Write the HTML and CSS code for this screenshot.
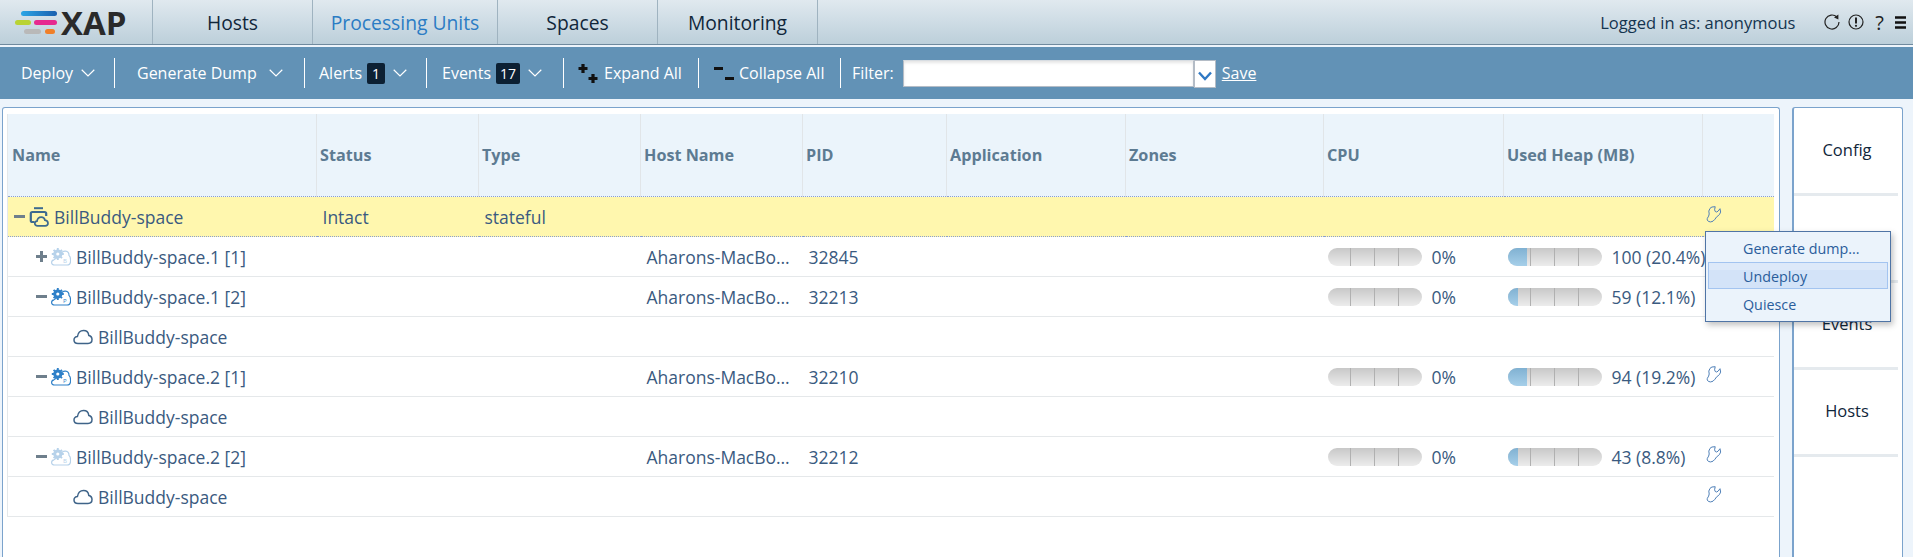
FILE: index.html
```html
<!DOCTYPE html>
<html lang="en">
<head>
    <meta charset="UTF-8">
    <title>XAP - Processing Units</title>
    <link rel="stylesheet" href="styles.css">
</head>
<body>

    <svg class="icon-defs" width="0" height="0">
        <defs>
            <linearGradient id="logo-blue">
                <stop offset="0" stop-color="#2ba6e6"/>
                <stop offset="1" stop-color="#1a5fae"/>
            </linearGradient>
        </defs>
        <symbol id="wrench" viewBox="-1 -1 16 18">
            <path d="M5 1 L8.2 0.7 L7.6 3.8 Q7.8 6 9.6 6 Q10.8 6 13 2.7 Q14.6 6.5 12.4 8.6 Q11.2 9.8 9.7 10.8 Q8 13.5 6 15.2 Q3.5 16.6 1.4 15.4 Q-0.4 14 0.3 12.4 Q2 10 2.2 8 Q1 5 3 2.4 Q4 1.4 5 1 Z" fill="none" stroke="#4f80b8" stroke-width="1"/>
        </symbol>
        <symbol id="cloud" viewBox="0 0 20 16">
            <path d="M5 14.5 C2.5 14.5 1 13 1 11 C1 9 2.5 7.6 4.4 7.6 C5 4 7.6 1.6 10.6 1.6 C13.4 1.6 15.4 3.6 15.8 6.4 C17.8 6.8 19 8.6 19 10.6 C19 13 17.2 14.5 15 14.5 Z" fill="none" stroke="#3f6489" stroke-width="1.5"/>
        </symbol>
        <symbol id="space" viewBox="0 0 20 20">
            <path d="M5 1.2 H14" stroke="#3d6a8f" stroke-width="2"/>
            <path d="M5.5 15 H3.5 C2.4 15 1.8 14.4 1.8 13.4 V6.6 C1.8 5.6 2.4 5 3.4 5 H15.4 C16.6 5 17.2 5.6 17.2 6.6 V9" fill="none" stroke="#3d6a8f" stroke-width="2.2"/>
            <path d="M8.5 18.8 C6.8 18.8 5.8 17.8 5.8 16.5 C5.8 15.2 6.8 14.3 8 14.2 C8.4 11.8 10 10.2 12.2 10.2 C14.2 10.2 15.6 11.5 15.9 13.2 C17.6 13.4 19 14.6 19 16.3 C19 17.8 17.8 18.8 16.2 18.8 Z" fill="none" stroke="#3d6a8f" stroke-width="1.7"/>
        </symbol>
        <symbol id="gear-cloud" viewBox="0 0 20 18">
            <path d="M3.5 17 C1.6 17 0.6 15.8 0.6 14.4 C0.6 13 1.6 12 3 11.8 L10 7 C10.6 4.4 12.6 3 14.6 3.2 C16.8 3.4 18 5.2 18 7.4 C19.2 8.4 19.6 10 19.6 12.4 C19.6 15.4 18.2 17 16 17 Z" fill="none" stroke="currentColor" stroke-width="1.2"/>
            <circle cx="6.8" cy="6" r="3.2" fill="none" stroke="currentColor" stroke-width="2.8"/>
            <path d="M6.8 0 V12 M0.8 6 H12.8 M2.6 1.8 L11 10.2 M11 1.8 L2.6 10.2" stroke="currentColor" stroke-width="1.9"/>
            <circle cx="6.8" cy="6" r="1.6" fill="#fff"/>
        </symbol>
        <symbol id="chevron" viewBox="0 0 14 8">
            <path d="M0.7 0.8 L7 7 L13.3 0.8" fill="none" stroke="currentColor" stroke-width="1.2"/>
        </symbol>
    </svg>

    <header class="top-bar">
        <div class="logo">
            <svg class="logo-bars" width="42" height="23" viewBox="0 0 42 23">
                <rect x="6" y="0" width="36" height="5" rx="2.5" fill="url(#logo-blue)"/>
                <rect x="0" y="9" width="16" height="5" rx="2.5" fill="#b9d334"/>
                <rect x="19" y="9" width="23" height="5" rx="2.5" fill="#e6298f"/>
                <rect x="9" y="18" width="17" height="5" rx="2.5" fill="#b9b9b9"/>
                <rect x="30" y="18" width="10" height="5" rx="2.5" fill="#f0802a"/>
            </svg>
            <span class="logo-text">XAP</span>
        </div>
        <nav class="nav-tabs">
            <a class="nav-tab">Hosts</a>
            <a class="nav-tab nav-wide active">Processing Units</a>
            <a class="nav-tab">Spaces</a>
            <a class="nav-tab">Monitoring</a>
        </nav>
        <div class="user-box">
            <span class="user-name">Logged in as: anonymous</span>
            <svg class="top-icon" width="16" height="16" viewBox="0 0 16 16">
                <path d="M12.9 3 A7 7 0 1 0 15 8" fill="none" stroke="#222" stroke-width="1.2"/>
                <path d="M10 3.4 L14.4 0.6 L14.4 5.4 Z" fill="#222"/>
            </svg>
            <svg class="top-icon" width="16" height="16" viewBox="0 0 16 16">
                <circle cx="8" cy="8" r="7" fill="none" stroke="#222" stroke-width="1.2"/>
                <path d="M8 3.4 V9.4" stroke="#222" stroke-width="2"/>
                <circle cx="8" cy="11.8" r="1.1" fill="#222"/>
            </svg>
            <span class="help-mark">?</span>
            <svg class="top-icon" width="11" height="13" viewBox="0 0 11 13">
                <path d="M0 1.5 H11 M0 6.5 H11 M0 11.5 H11" stroke="#111" stroke-width="2.4"/>
            </svg>
        </div>
    </header>

    <div class="toolbar">
        <div class="tool tool-deploy">Deploy <svg class="chevron"><use href="#chevron"/></svg></div>
        <div class="tool tool-dump">Generate Dump <svg class="chevron"><use href="#chevron"/></svg></div>
        <div class="tool tool-alerts">Alerts <span class="badge">1</span> <svg class="chevron"><use href="#chevron"/></svg></div>
        <div class="tool tool-events">Events <span class="badge">17</span> <svg class="chevron"><use href="#chevron"/></svg></div>
        <div class="tool tool-expand">
            <svg class="tree-all" width="20" height="22" viewBox="0 0 20 22">
                <path d="M5 2 V11 M0.5 6.5 H9.5 M15 12 V21 M10.5 16.5 H19.5" stroke="#111" stroke-width="3.2"/>
            </svg>
            Expand All
        </div>
        <div class="tool tool-collapse">
            <svg class="tree-all" width="20" height="22" viewBox="0 0 20 22">
                <path d="M0 6.5 H9 M11 16.5 H20" stroke="#111" stroke-width="3.2"/>
            </svg>
            Collapse All
        </div>
        <div class="filter-box">
            <label class="filter-label" for="filter">Filter:</label>
            <input class="filter-input" id="filter" type="text">
            <span class="filter-arrow">
                <svg width="14" height="10" viewBox="0 0 14 10"><path d="M1 1.5 L7 8 L13 1.5" fill="none" stroke="#2f78c4" stroke-width="2.4"/></svg>
            </span>
            <a class="save-link">Save</a>
        </div>
    </div>

    <main class="content">
        <section class="grid-panel">
            <table class="pu-table">
                <colgroup>
                    <col class="col-name"><col class="col-std"><col class="col-std"><col class="col-std">
                    <col class="col-pid"><col class="col-app"><col class="col-zones"><col class="col-cpu">
                    <col class="col-heap"><col>
                </colgroup>
                <thead>
                    <tr>
                        <th>Name</th><th>Status</th><th>Type</th><th>Host Name</th><th>PID</th>
                        <th>Application</th><th>Zones</th><th>CPU</th><th>Used Heap (MB)</th><th></th>
                    </tr>
                </thead>
                <tbody>
                    <tr class="selected">
                        <td><div class="tree-cell"><span class="toggle"></span><svg class="node-icon"><use href="#space"/></svg>BillBuddy-space</div></td>
                        <td>Intact</td><td>stateful</td><td></td><td></td><td></td><td></td><td></td><td></td>
                        <td class="wrench-cell"><svg class="wrench"><use href="#wrench"/></svg></td>
                    </tr>
                    <tr>
                        <td><div class="tree-cell level-1"><span class="toggle plus"></span><svg class="node-icon faded" viewBox="0 0 20 18"><use href="#gear-cloud"/><text x="12" y="15" class="role-letter">B</text></svg>BillBuddy-space.1 [1]</div></td>
                        <td></td><td></td><td>Aharons-MacBo&hellip;</td><td>32845</td><td></td><td></td>
                        <td><div class="meter-cell"><div class="meter"><i></i><i></i><i></i><i></i></div>0%</div></td>
                        <td><div class="meter-cell"><div class="meter"><b class="fill" style="width:19px"></b><i></i><i></i><i></i><i></i></div>100 (20.4%)</div></td>
                        <td></td>
                    </tr>
                    <tr>
                        <td><div class="tree-cell level-1"><span class="toggle"></span><svg class="node-icon primary" viewBox="0 0 20 18"><use href="#gear-cloud"/><text x="12" y="15" class="role-letter">P</text></svg>BillBuddy-space.1 [2]</div></td>
                        <td></td><td></td><td>Aharons-MacBo&hellip;</td><td>32213</td><td></td><td></td>
                        <td><div class="meter-cell"><div class="meter"><i></i><i></i><i></i><i></i></div>0%</div></td>
                        <td><div class="meter-cell"><div class="meter"><b class="fill" style="width:10px"></b><i></i><i></i><i></i><i></i></div>59 (12.1%)</div></td>
                        <td></td>
                    </tr>
                    <tr>
                        <td><div class="tree-cell level-2"><svg class="node-icon"><use href="#cloud"/></svg>BillBuddy-space</div></td>
                        <td></td><td></td><td></td><td></td><td></td><td></td><td></td><td></td><td></td>
                    </tr>
                    <tr>
                        <td><div class="tree-cell level-1"><span class="toggle"></span><svg class="node-icon primary" viewBox="0 0 20 18"><use href="#gear-cloud"/><text x="12" y="15" class="role-letter">P</text></svg>BillBuddy-space.2 [1]</div></td>
                        <td></td><td></td><td>Aharons-MacBo&hellip;</td><td>32210</td><td></td><td></td>
                        <td><div class="meter-cell"><div class="meter"><i></i><i></i><i></i><i></i></div>0%</div></td>
                        <td><div class="meter-cell"><div class="meter"><b class="fill" style="width:19px"></b><i></i><i></i><i></i><i></i></div>94 (19.2%)</div></td>
                        <td class="wrench-cell"><svg class="wrench"><use href="#wrench"/></svg></td>
                    </tr>
                    <tr>
                        <td><div class="tree-cell level-2"><svg class="node-icon"><use href="#cloud"/></svg>BillBuddy-space</div></td>
                        <td></td><td></td><td></td><td></td><td></td><td></td><td></td><td></td><td></td>
                    </tr>
                    <tr>
                        <td><div class="tree-cell level-1"><span class="toggle"></span><svg class="node-icon faded" viewBox="0 0 20 18"><use href="#gear-cloud"/><text x="12" y="15" class="role-letter">B</text></svg>BillBuddy-space.2 [2]</div></td>
                        <td></td><td></td><td>Aharons-MacBo&hellip;</td><td>32212</td><td></td><td></td>
                        <td><div class="meter-cell"><div class="meter"><i></i><i></i><i></i><i></i></div>0%</div></td>
                        <td><div class="meter-cell"><div class="meter"><b class="fill" style="width:10px"></b><i></i><i></i><i></i><i></i></div>43 (8.8%)</div></td>
                        <td class="wrench-cell"><svg class="wrench"><use href="#wrench"/></svg></td>
                    </tr>
                    <tr>
                        <td><div class="tree-cell level-2"><svg class="node-icon"><use href="#cloud"/></svg>BillBuddy-space</div></td>
                        <td></td><td></td><td></td><td></td><td></td><td></td><td></td><td></td>
                        <td class="wrench-cell"><svg class="wrench"><use href="#wrench"/></svg></td>
                    </tr>
                </tbody>
            </table>
        </section>

        <aside class="side-tabs">
            <a class="side-tab">Config</a>
            <a class="side-tab"></a>
            <a class="side-tab">Events</a>
            <a class="side-tab">Hosts</a>
        </aside>
    </main>

    <ul class="context-menu">
        <li>Generate dump...</li>
        <li class="hover">Undeploy</li>
        <li>Quiesce</li>
    </ul>

</body>
</html>
```

FILE: styles.css
```css
html, body {
    height: 100%;
}

body {
    font-family: "Open Sans", Arial, sans-serif;
    margin: 0;
    padding: 0;
    height: 100vh;
    overflow: hidden;
    display: flex;
    flex-direction: column;
    background-color: #edf4fb;
    color: #3a5a80;
}

.icon-defs {
    position: absolute;
}

.role-letter {
    font-size: 6px;
    fill: currentColor;
}

/* top bar */
.top-bar {
    display: flex;
    align-items: stretch;
    height: 44px;
    flex: none;
    background: linear-gradient(#e0e9ef, #bccfda);
    border-bottom: 1px solid #6f8a9e;
}

.logo {
    width: 152px;
    display: flex;
    align-items: center;
    padding-left: 15px;
    box-sizing: border-box;
    gap: 4px;
}

.logo-text {
    font-size: 33px;
    font-weight: 700;
    color: #2a2a2a;
    line-height: 1;
}

.logo-bars {
    margin-top: 1px;
    flex: none;
}

.nav-tabs {
    display: flex;
    border-left: 1px solid #9fb3c0;
}

.nav-tab {
    width: 159px;
    display: flex;
    align-items: center;
    justify-content: center;
    border-right: 1px solid #9fb3c0;
    font-size: 19.3px;
    font-weight: 500;
    color: #10263a;
}

.nav-wide {
    width: 184px;
}

.nav-tab.active {
    color: #2b7cc4;
}

.user-box {
    margin-left: auto;
    display: flex;
    align-items: center;
    padding-right: 7px;
    gap: 8px;
}

.user-name {
    font-size: 16.5px;
    color: #14344f;
    margin-right: 21px;
}

.help-mark {
    font-size: 20px;
    color: #222;
    margin: 0 3px;
}

/* toolbar */
.toolbar {
    flex: none;
    height: 52px;
    margin-top: 2px;
    background-color: #6292b6;
    display: flex;
    align-items: center;
    color: #fff;
    font-size: 16px;
}

.tool {
    height: 30px;
    display: flex;
    align-items: center;
    box-sizing: border-box;
    border-right: 1px solid #fff;
    white-space: nowrap;
    gap: 5px;
}

.tool-deploy {
    width: 115px;
    padding-left: 21px;
}

.tool-dump {
    width: 190px;
    padding-left: 22px;
    gap: 9px;
}

.tool-alerts {
    width: 122px;
    padding-left: 14px;
}

.tool-events {
    width: 137px;
    padding-left: 15px;
}

.tool-expand {
    width: 135px;
    padding-left: 14px;
    gap: 6px;
}

.tool-collapse {
    width: 142px;
    padding-left: 15px;
    gap: 5px;
}

.chevron {
    width: 14px;
    height: 8px;
    margin-left: 3px;
    flex: none;
}

.badge {
    background-color: #0c2033;
    border-radius: 2px;
    font-size: 14px;
    line-height: 21px;
    padding: 0 4px;
    min-width: 10px;
    text-align: center;
}

.filter-box {
    display: flex;
    align-items: center;
    padding-left: 11px;
}

.filter-label {
    margin-right: 9px;
}

.filter-input {
    width: 291px;
    height: 27px;
    box-sizing: border-box;
    border: 1px solid #b4bcc6;
    border-top-color: #d8dde2;
    background-color: #fff;
    box-shadow: inset 0 2px 3px rgba(0, 0, 0, 0.1);
    padding: 0;
}

.filter-arrow {
    width: 22px;
    height: 28px;
    margin-top: 2px;
    box-sizing: border-box;
    border: 1px solid #b4bcc6;
    background-color: #fff;
    display: flex;
    align-items: center;
    justify-content: center;
    padding-top: 4px;
}

.save-link {
    margin-left: 6px;
    text-decoration: underline;
}

/* main area */
.content {
    flex: 1;
    display: flex;
    padding: 8px 10px 0 2px;
    gap: 12px;
    min-height: 0;
}

.grid-panel {
    width: 1778px;
    box-sizing: border-box;
    flex: none;
    background-color: #fff;
    border: 1px solid #7ba3cc;
    border-bottom: none;
    border-radius: 3px 3px 0 0;
    padding: 6px 5px 0 4px;
}

.pu-table {
    width: 1767px;
    table-layout: fixed;
    border-collapse: collapse;
    border-left: 1px solid #e4e8ea;
}

.col-name { width: 309px; }
.col-std { width: 162px; }
.col-pid { width: 144px; }
.col-app { width: 179px; }
.col-zones { width: 198px; }
.col-cpu { width: 180px; }
.col-heap { width: 199px; }

th {
    height: 81px;
    padding: 0 0 1px 3px;
    background-color: #ebf4fb;
    text-align: left;
    font-size: 16.2px;
    font-weight: 700;
    color: #5d7b92;
    border-right: 1px solid #e1e5e8;
}

th:first-child {
    padding-left: 4px;
}

th:last-child {
    border-right: none;
}

td {
    height: 39px;
    padding: 0 0 0 6px;
    font-size: 17.5px;
    color: #3a5a80;
    border-bottom: 1px solid #e5e8ea;
    white-space: nowrap;
}

tr.selected td {
    background-color: #fff7ae;
    border-top: 1px dotted #8b9fd0;
    border-bottom: 1px dotted #8b9fd0;
}

.tree-cell {
    display: flex;
    align-items: center;
}

.tree-cell.level-1 {
    padding-left: 22px;
}

.tree-cell.level-2 {
    padding-left: 59px;
}

.toggle {
    width: 15px;
    height: 11px;
    flex: none;
    position: relative;
}

.toggle::before {
    content: "";
    position: absolute;
    left: 0;
    top: 4px;
    width: 11px;
    height: 3px;
    background-color: #6e7f8c;
}

.toggle.plus::after {
    content: "";
    position: absolute;
    left: 4px;
    top: 0;
    width: 3px;
    height: 11px;
    background-color: #6e7f8c;
}

.node-icon {
    width: 20px;
    height: 20px;
    margin-right: 5px;
    flex: none;
}

.node-icon.faded {
    color: #b7d2ea;
}

.node-icon.primary {
    color: #2f80c8;
}

.meter-cell {
    display: flex;
    align-items: center;
    gap: 10px;
    margin-left: -2px;
}

.meter {
    width: 94px;
    height: 18px;
    border-radius: 9px;
    overflow: hidden;
    position: relative;
    display: flex;
    background: linear-gradient(#c8c8c8, #ececec);
    flex: none;
}

.meter i {
    flex: 1;
    border-right: 1px solid #b0b0b0;
}

.meter i:last-child {
    border-right: none;
}

.fill {
    position: absolute;
    left: 0;
    top: 0;
    bottom: 0;
    background: linear-gradient(#80b1d2, #a6cfe9);
}

.wrench-cell {
    padding-left: 3px;
}

.wrench {
    width: 16px;
    height: 18px;
    display: block;
    margin-top: -5px;
}

/* side tabs */
.side-tabs {
    width: 111px;
    box-sizing: border-box;
    flex: none;
    background-color: #fff;
    border: 1px solid #7ba3cc;
    border-left-width: 2px;
    border-bottom: none;
    border-radius: 3px 3px 0 0;
    padding: 1px 4px 0 0;
}

.side-tab {
    height: 80px;
    padding: 0 0 4px 2px;
    display: flex;
    align-items: center;
    justify-content: center;
    border-bottom: 3px solid #e5eaee;
    font-size: 16.5px;
    color: #10263a;
}

/* wrench menu */
.context-menu {
    position: absolute;
    left: 1705px;
    top: 231px;
    width: 186px;
    height: 91px;
    box-sizing: border-box;
    margin: 0;
    padding: 2px 2px 0;
    list-style: none;
    background-color: #ebf3fb;
    border: 1px solid #4f74a5;
    box-shadow: 2px 3px 6px rgba(0, 0, 0, 0.25);
    font-size: 14.3px;
    color: #2a5d9b;
}

.context-menu li {
    height: 27px;
    line-height: 27px;
    padding-left: 34px;
    box-sizing: border-box;
    border: 1px solid transparent;
    margin-bottom: 1px;
}

.context-menu li.hover {
    background: linear-gradient(#dde9f9 30%, #d3e3f8 30%);
    border-color: #a3c4f0;
}
```
